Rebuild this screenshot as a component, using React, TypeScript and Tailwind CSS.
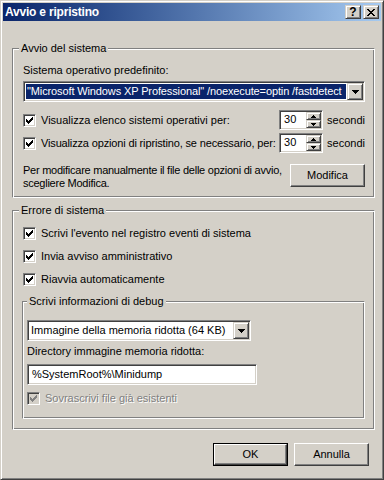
import React from "react";

const raisedBtn =
  "border border-t-white border-l-white border-r-[#404040] border-b-[#404040] shadow-[inset_-1px_-1px_0_#808080]";
const raisedArrow =
  "border border-t-[#D4D0C8] border-l-[#D4D0C8] border-r-[#404040] border-b-[#404040] shadow-[inset_1px_1px_0_#fff,inset_-1px_-1px_0_#808080]";
const sunken =
  "border border-t-[#808080] border-l-[#808080] border-r-white border-b-white shadow-[inset_1px_1px_0_#404040,inset_-1px_-1px_0_#D4D0C8]";
const etched =
  "border border-t-[#808080] border-l-[#808080] border-r-white border-b-white shadow-[inset_1px_1px_0_#fff,inset_-1px_-1px_0_#808080]";

function CheckGlyph({ color }: { color: string }) {
  return (
    <svg width="7" height="7" viewBox="0 0 7 7" shapeRendering="crispEdges" fill={color}>
      <path d="M6 0h1v1H6z M5 1h2v1H5z M0 2h1v1H0z M4 2h3v1H4z M0 3h2v1H0z M3 3h3v1H3z M0 4h5v1H0z M1 5h3v1H1z M2 6h1v1H2z" />
    </svg>
  );
}

function XGlyph() {
  return (
    <svg width="8" height="7" viewBox="0 0 8 7" shapeRendering="crispEdges" fill="#000">
      <path d="M0 0h2v1H0z M6 0h2v1H6z M1 1h2v1H1z M5 1h2v1H5z M2 2h4v1H2z M3 3h2v1H3z M2 4h4v1H2z M1 5h2v1H1z M5 5h2v1H5z M0 6h2v1H0z M6 6h2v1H6z" />
    </svg>
  );
}

function DownArrow() {
  return (
    <svg width="7" height="4" viewBox="0 0 7 4" shapeRendering="crispEdges" fill="#000">
      <path d="M0 0h7v1H0z M1 1h5v1H1z M2 2h3v1H2z M3 3h1v1H3z" />
    </svg>
  );
}

function SmallUp() {
  return (
    <svg width="5" height="3" viewBox="0 0 5 3" shapeRendering="crispEdges" fill="#000">
      <path d="M2 0h1v1H2z M1 1h3v1H1z M0 2h5v1H0z" />
    </svg>
  );
}

function SmallDown() {
  return (
    <svg width="5" height="3" viewBox="0 0 5 3" shapeRendering="crispEdges" fill="#000">
      <path d="M0 0h5v1H0z M1 1h3v1H1z M2 2h1v1H2z" />
    </svg>
  );
}

function Checkbox({ disabled = false, className = "" }: { disabled?: boolean; className?: string }) {
  return (
    <div
      className={`w-[13px] h-[13px] shrink-0 ${sunken} ${disabled ? "bg-[#D4D0C8]" : "bg-white"} flex items-center justify-center ${className}`}
    >
      <CheckGlyph color={disabled ? "#808080" : "#000"} />
    </div>
  );
}

function Spinner() {
  return (
    <div className={`w-[44px] h-[20px] shrink-0 ${sunken} bg-white p-[1px] flex`}>
      <div className="flex-1 pl-[3px] pt-[1px] leading-[13px]">30</div>
      <div className="w-[15px] flex flex-col">
        <div className={`h-[8px] ${raisedArrow} bg-[#D4D0C8] flex items-center justify-center`}>
          <SmallUp />
        </div>
        <div className={`h-[8px] ${raisedArrow} bg-[#D4D0C8] flex items-center justify-center`}>
          <SmallDown />
        </div>
      </div>
    </div>
  );
}

function DropButton() {
  return (
    <div className={`w-[16px] h-[17px] shrink-0 ${raisedArrow} bg-[#D4D0C8] flex items-center justify-center`}>
      <DownArrow />
    </div>
  );
}

export default function App() {
  return (
    <div className="w-[384px] h-[480px] bg-[#D4D0C8] border border-t-[#D4D0C8] border-l-[#D4D0C8] border-r-[#404040] border-b-[#404040] shadow-[inset_1px_1px_0_#fff,inset_-1px_-1px_0_#808080] p-[2px] flex flex-col text-[11px] leading-[13px] text-black [font-family:'Liberation_Sans',Arial,sans-serif]">
      {/* Title bar */}
      <div className="h-[18px] shrink-0 flex items-center bg-linear-to-r from-[#0A246A] to-[#A6CAF0] pl-[2px] pr-[2px]">
        <span className="flex-1 text-white font-bold text-[12px] leading-[14px] tracking-[-0.2px]">
          Avvio e ripristino
        </span>
        <div className={`w-[16px] h-[14px] ${raisedArrow} bg-[#D4D0C8] flex items-center justify-center`}>
          <span className="font-bold text-[12px] leading-[12px]">?</span>
        </div>
        <div className={`ml-[2px] w-[16px] h-[14px] ${raisedArrow} bg-[#D4D0C8] flex items-center justify-center`}>
          <XGlyph />
        </div>
      </div>

      {/* Group 1 */}
      <div className={`ml-[9px] mt-[27px] w-[363px] h-[150px] shrink-0 ${etched} flex flex-col`}>
        <div className="-mt-[7px] ml-[6px] self-start px-[2px] bg-[#D4D0C8]">Avvio del sistema</div>
        <div className="flex flex-col pl-[10px] pr-[9px]">
          <div className="mt-[9px]">Sistema operativo predefinito:</div>
          <div className={`mt-[4px] h-[21px] ${sunken} bg-white p-[1px] flex`}>
            <div className="flex-1 min-w-0 m-[1px] bg-[#0A246A] text-white overflow-hidden whitespace-nowrap pl-[1px] leading-[15px] tracking-[-0.12px]">
              "Microsoft Windows XP Professional" /noexecute=optin /fastdetect
            </div>
            <DropButton />
          </div>

          <div className="mt-[8px] h-[20px] flex items-start">
            <div className="w-[258px] flex items-start">
              <Checkbox className="mt-[4px]" />
              <span className="ml-[5px] mt-[4px] whitespace-nowrap">Visualizza elenco sistemi operativi per:</span>
            </div>
            <Spinner />
            <span className="ml-[4px] mt-[4px]">secondi</span>
          </div>

          <div className="mt-[3px] h-[20px] flex items-start">
            <div className="w-[258px] flex items-start">
              <Checkbox className="mt-[4px]" />
              <span className="ml-[5px] mt-[4px] whitespace-nowrap tracking-[-0.15px]">
                Visualizza opzioni di ripristino, se necessario, per:
              </span>
            </div>
            <Spinner />
            <span className="ml-[4px] mt-[4px]">secondi</span>
          </div>

          <div className="mt-[11px] flex items-start justify-between">
            <div className="whitespace-nowrap tracking-[-0.25px]">
              Per modificare manualmente il file delle opzioni di avvio,
              <br />
              scegliere Modifica.
            </div>
            <div className={`w-[75px] h-[23px] shrink-0 ${raisedBtn} flex items-center justify-center`}>
              Modifica
            </div>
          </div>
        </div>
      </div>

      {/* Group 2 */}
      <div className={`ml-[9px] mt-[12px] w-[363px] h-[220px] shrink-0 ${etched} flex flex-col`}>
        <div className="-mt-[7px] ml-[6px] self-start px-[2px] bg-[#D4D0C8]">Errore di sistema</div>
        <div className="flex flex-col pl-[10px] pr-[9px]">
          <div className="mt-[10px] h-[13px] flex items-center">
            <Checkbox />
            <span className="ml-[5px]">Scrivi l'evento nel registro eventi di sistema</span>
          </div>
          <div className="mt-[10px] h-[13px] flex items-center">
            <Checkbox />
            <span className="ml-[5px]">Invia avviso amministrativo</span>
          </div>
          <div className="mt-[10px] h-[13px] flex items-center">
            <Checkbox />
            <span className="ml-[5px]">Riavvia automaticamente</span>
          </div>

          {/* Inner group */}
          <div className={`mt-[15px] -ml-[1px] w-[343px] h-[118px] ${etched} flex flex-col`}>
            <div className="-mt-[7px] ml-[4px] self-start px-[2px] bg-[#D4D0C8]">Scrivi informazioni di debug</div>
            <div className="flex flex-col pl-[4px]">
              <div className={`mt-[12px] w-[224px] h-[21px] ${sunken} bg-white p-[1px] flex`}>
                <div className="flex-1 min-w-0 pl-[2px] leading-[17px] whitespace-nowrap overflow-hidden">
                  Immagine della memoria ridotta (64 KB)
                </div>
                <DropButton />
              </div>
              <div className="mt-[4px]">Directory immagine memoria ridotta:</div>
              <div className={`mt-[6px] w-[230px] h-[21px] ${sunken} bg-white p-[1px] flex`}>
                <div className="flex-1 pl-[3px] leading-[17px] whitespace-nowrap">%SystemRoot%\Minidump</div>
              </div>
              <div className="mt-[7px] h-[13px] flex items-center">
                <Checkbox disabled />
                <span className="ml-[5px] text-[#808080] [text-shadow:1px_1px_0_#fff]">
                  Sovrascrivi file già esistenti
                </span>
              </div>
            </div>
          </div>
        </div>
      </div>

      {/* Buttons */}
      <div className="mt-[13px] flex justify-end pr-[12px] gap-[6px]">
        <div className="w-[75px] h-[23px] border border-black">
          <div className={`w-full h-full ${raisedBtn} flex items-center justify-center`}>OK</div>
        </div>
        <div className={`w-[75px] h-[23px] ${raisedBtn} flex items-center justify-center`}>Annulla</div>
      </div>
    </div>
  );
}
